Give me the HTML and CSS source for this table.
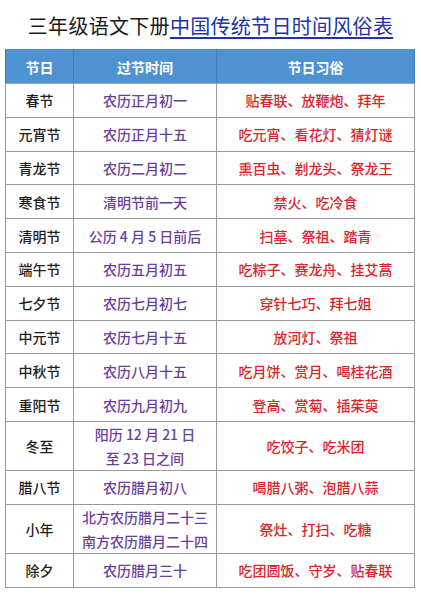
FILE: index.html
```html
<!DOCTYPE html>
<html lang="zh">
<head>
<meta charset="utf-8">
<link rel="stylesheet" href="styles.css">
</head>
<body>
<h1 class="title">三年级语文下册<span class="title-link">中国传统节日时间风俗表</span></h1>
<table class="festivals">
  <thead>
    <tr><th class="c1">节日</th><th class="c2">过节时间</th><th class="c3">节日习俗</th></tr>
  </thead>
  <tbody>
    <tr><td class="name">春节</td><td class="time">农历正月初一</td><td class="custom">贴春联、放鞭炮、拜年</td></tr>
    <tr><td class="name">元宵节</td><td class="time">农历正月十五</td><td class="custom">吃元宵、看花灯、猜灯谜</td></tr>
    <tr><td class="name">青龙节</td><td class="time">农历二月初二</td><td class="custom">熏百虫、剃龙头、祭龙王</td></tr>
    <tr><td class="name">寒食节</td><td class="time">清明节前一天</td><td class="custom">禁火、吃冷食</td></tr>
    <tr><td class="name">清明节</td><td class="time">公历 4 月 5 日前后</td><td class="custom">扫墓、祭祖、踏青</td></tr>
    <tr><td class="name">端午节</td><td class="time">农历五月初五</td><td class="custom">吃粽子、赛龙舟、挂艾蒿</td></tr>
    <tr><td class="name">七夕节</td><td class="time">农历七月初七</td><td class="custom">穿针七巧、拜七姐</td></tr>
    <tr><td class="name">中元节</td><td class="time">农历七月十五</td><td class="custom">放河灯、祭祖</td></tr>
    <tr><td class="name">中秋节</td><td class="time">农历八月十五</td><td class="custom">吃月饼、赏月、喝桂花酒</td></tr>
    <tr><td class="name">重阳节</td><td class="time">农历九月初九</td><td class="custom">登高、赏菊、插茱萸</td></tr>
    <tr class="tall"><td class="name">冬至</td><td class="time">阳历 12 月 21 日<br>至 23 日之间</td><td class="custom">吃饺子、吃米团</td></tr>
    <tr><td class="name">腊八节</td><td class="time">农历腊月初八</td><td class="custom">喝腊八粥、泡腊八蒜</td></tr>
    <tr class="tall"><td class="name">小年</td><td class="time">北方农历腊月二十三<br>南方农历腊月二十四</td><td class="custom">祭灶、打扫、吃糖</td></tr>
    <tr><td class="name">除夕</td><td class="time">农历腊月三十</td><td class="custom">吃团圆饭、守岁、贴春联</td></tr>
  </tbody>
</table>
</body>
</html>
```
FILE: styles.css
```css
html, body {
  margin: 0;
  padding: 0;
  background: #ffffff;
}
body {
  font-family: "Noto Sans CJK SC", "Noto Sans", sans-serif;
  padding: 12px 5px 0 5px;
}
.title {
  margin: 0 0 10px 0;
  font-size: 20px;
  font-weight: 400;
  line-height: 27px;
  color: #1a1a1a;
  text-align: center;
  letter-spacing: 0.3px;
}
.title-link {
  color: #2233a8;
  text-decoration: underline;
  text-decoration-thickness: 2px;
  text-underline-offset: 3px;
}
.festivals {
  width: 410px;
  border-collapse: collapse;
  table-layout: fixed;
}
.festivals th, .festivals td {
  border: 1px solid #9a9a9a;
  text-align: center;
  padding: 0;
  font-size: 14px;
  line-height: 24px;
}
.festivals th {
  background: #4f92d2;
  color: #ffffff;
  font-weight: 700;
  height: 33px;
  border-color: #4f92d2 #3f7fbf #8aa7c4 #3f7fbf;
}
.c1 { width: 67px; }
.c2 { width: 142px; }
.c3 { width: auto; }
.festivals tbody tr { height: 33.8px; }
.festivals tbody tr.tall { height: 49px; }
.name {
  color: #1e1e1e;
  font-weight: 500;
}
.time {
  color: #6a3f9c;
  font-weight: 500;
}
.custom {
  color: #d8262c;
  font-weight: 500;
}
```
